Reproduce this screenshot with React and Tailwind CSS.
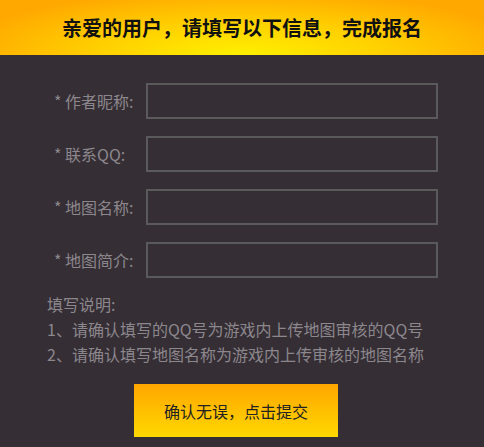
import React from "react";

const fields = ["作者昵称", "联系QQ", "地图名称", "地图简介"];

const App = () => {
    return (
        <div
            className="w-[484px] h-[447px] bg-[#352e35] overflow-hidden"
            style={{ fontFamily: '"Noto Sans CJK SC", "Noto Sans", sans-serif' }}
        >
            {/* header */}
            <div className="h-[55px] flex items-center justify-center bg-[radial-gradient(ellipse_60%_120%_at_50%_100%,#fff000_0%,#ffd000_50%,#ffa800_100%)]">
                <h1 className="text-[20px] font-bold text-[#111]">
                    亲爱的用户，请填写以下信息，完成报名
                </h1>
            </div>

            <div className="pt-[28px]">
                <div className="flex flex-col gap-[17px]">
                    {fields.map((f) => (
                        <div key={f} className="flex items-center">
                            <label className="w-[146px] pl-[54px] text-[16px] text-[#8c878c] whitespace-nowrap">
                                * {f}:
                            </label>
                            <input
                                type="text"
                                className="w-[292px] h-[36px] bg-transparent border-2 border-[#5a5a5a] outline-none text-[#ccc] px-2"
                            />
                        </div>
                    ))}
                </div>

                <div className="mt-[14px] pl-[47px] text-[16px] leading-[25px] text-[#8c878c]">
                    <p>填写说明:</p>
                    <p>1、请确认填写的QQ号为游戏内上传地图审核的QQ号</p>
                    <p>2、请确认填写地图名称为游戏内上传审核的地图名称</p>
                </div>

                <div className="mt-[17px] pl-[134px]">
                    <button className="w-[204px] h-[53px] bg-gradient-to-b from-[#ffa600] to-[#ffd800] text-[16px] text-[#222]">
                        确认无误，点击提交
                    </button>
                </div>
            </div>
        </div>
    );
};

export default App;
